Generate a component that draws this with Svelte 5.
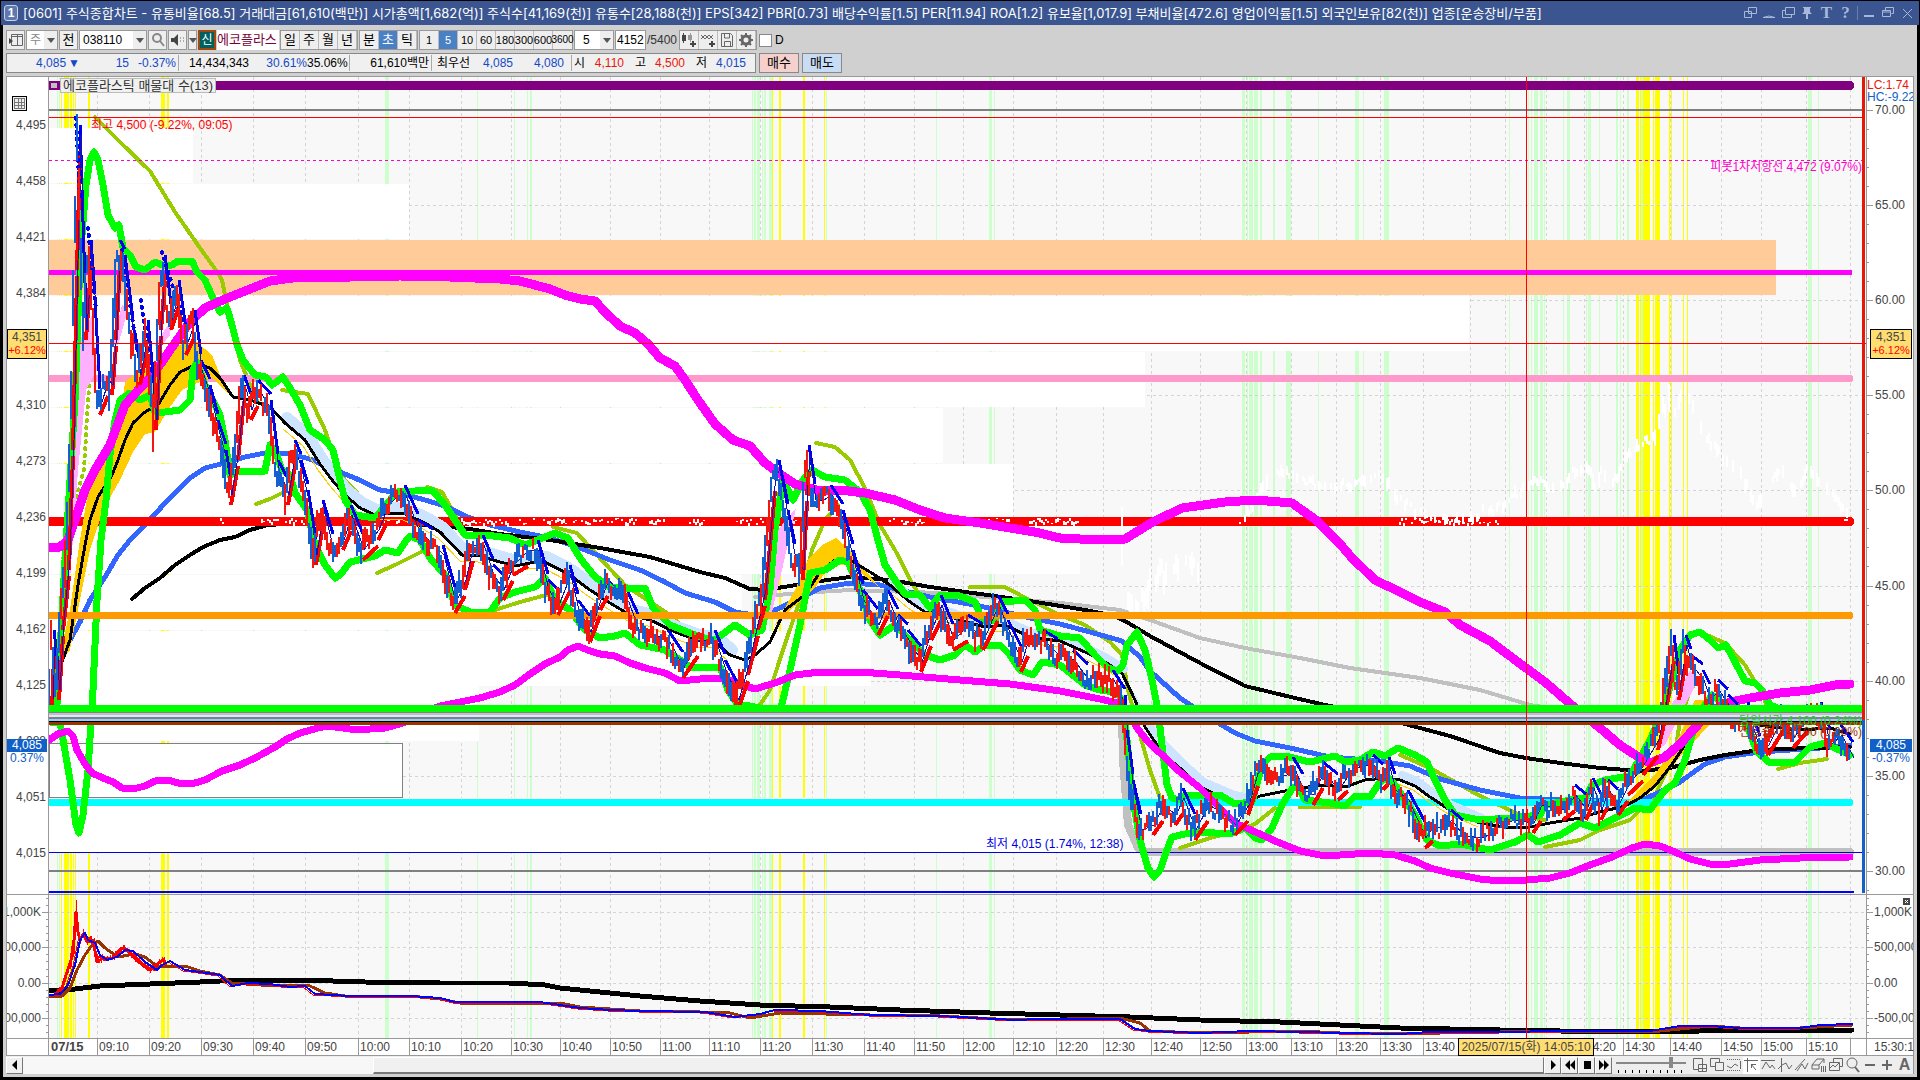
<script>
    let code = '038110'
    let count = '4152'
    let checkedD = false
    let zoomLevel = 80
    let period = '초'
    let unit = '5'

    const facts = '[0601] 주식종합차트 - 유통비율[68.5] 거래대금[61,610(백만)] 시가총액[1,682(억)] 주식수[41,169(천)] 유통수[28,188(천)] EPS[342] PBR[0.73] 배당수익률[1.5] PER[11.94] ROA[1.2] 유보율[1,017.9] 부채비율[472.6] 영업이익률[1.5] 외국인보유[82(천)] 업종[운송장비/부품]'
    const periods = ['일', '주', '월', '년']
    const intraday = ['분', '초', '틱']
    const units = ['1', '5', '10', '60', '180', '300', '600', '3600']

    // the drawing area runs from x 49 to 1866 and from y 77 to 1038
    const left = 49, width = 1817, top = 77
    const pct = (x) => (x - left) / width * 100

    const times = [
        ['09:10', 97], ['09:20', 149], ['09:30', 201], ['09:40', 253], ['09:50', 305], ['10:00', 358],
        ['10:10', 409], ['10:20', 461], ['10:30', 511], ['10:40', 560], ['10:50', 610], ['11:00', 660],
        ['11:10', 709], ['11:20', 760], ['11:30', 812], ['11:40', 864], ['11:50', 914], ['12:00', 963],
        ['12:10', 1013], ['12:20', 1056], ['12:30', 1103], ['12:40', 1151], ['12:50', 1200], ['13:00', 1246],
        ['13:10', 1291], ['13:20', 1336], ['13:30', 1380], ['13:40', 1423], ['', 1470], ['', 1505],
        ['', 1546], ['14:20', 1584], ['14:30', 1623], ['14:40', 1670], ['14:50', 1721], ['15:00', 1761],
        ['15:10', 1806], ['', 1850]
    ]

    const prices = [
        ['4,495', 124], ['4,458', 180], ['4,421', 236], ['4,384', 292], ['4,310', 404], ['4,273', 460], ['4,236', 516],
        ['4,199', 572], ['4,162', 628], ['4,125', 684], ['4,088', 740], ['4,051', 796], ['4,015', 852]
    ]
    const percents = ['70.00', '65.00', '60.00', '55.00', '50.00', '45.00', '40.00', '35.00', '30.00']
        .map((t, i) => [t, 110 + Math.round(i * 95.1)])
    const volumes = [['1,000K', 912], ['500,000', 947], ['0.00', 983], ['-500,000', 1018]]

    // [x, width]
    const green = [
        [57, 1], [59, 1], [385, 4], [477, 1], [514, 1], [527, 1], [530, 2], [752, 1], [754, 2], [757, 3], [762, 1],
        [764, 2], [769, 3], [826, 1], [936, 1], [989, 3], [994, 1], [1242, 3], [1247, 1], [1249, 4], [1254, 4],
        [1260, 2], [1273, 2], [1286, 5], [1318, 1], [1355, 4], [1363, 1], [1384, 5], [1509, 1], [1528, 1], [1531, 1],
        [1534, 4], [1540, 3], [1544, 1], [1563, 1], [1567, 3], [1586, 1], [1588, 3], [1599, 1], [1616, 2],
        [1620, 1], [1627, 2], [1641, 2], [1808, 4], [1818, 1]
    ]
    const yellow = [
        [61, 1], [64, 5], [70, 2], [73, 1], [75, 1], [88, 2], [161, 4], [167, 2], [772, 1], [779, 2], [803, 2],
        [824, 1], [1636, 3], [1640, 1], [1643, 7], [1653, 1], [1655, 5], [1669, 1], [1671, 1], [1683, 1], [1687, 1]
    ]

    // volume by price: top and right end of each bar
    const profile = [
        [128, 193], [184, 409], [296, 1469], [352, 1145], [408, 943], [464, 1013], [519, 1080],
        [575, 742], [631, 871], [686, 479], [798, 1122]
    ]

    const upperBand = '49,547 60,547 68,540 75,520 85,490 95,470 110,445 125,405 140,388 155,372 170,350 190,322 205,308 225,299 245,291 270,281 300,277 350,277 400,276 450,277 500,279 520,281 535,285 550,289 565,295 580,299 595,301 605,312 620,326 635,333 648,344 660,358 675,366 685,380 698,400 715,424 733,440 750,446 765,463 780,474 795,484 820,491 840,490 865,493 895,500 920,510 945,518 980,523 1010,528 1035,532 1060,538 1100,540 1125,539 1151,523 1182,508 1225,502 1255,500 1292,503 1316,520 1341,545 1352,558 1375,580 1400,592 1420,602 1445,612 1460,625 1490,641 1510,656 1526,668 1545,682 1560,695 1575,708 1600,728 1620,745 1640,758 1650,763 1665,757 1680,744 1695,728 1710,711 1730,702 1750,698 1780,693 1810,690 1835,685 1850,684'
    const lowerBand = '49,740 58,734 68,731 73,736 77,750 85,764 92,773 103,778 113,782 122,788 133,789 145,786 155,781 168,780 178,783 195,783 205,780 222,771 240,765 257,757 275,747 287,739 300,733 318,728 328,726 350,729 370,729 385,728 403,723 420,714 440,706 455,703 480,698 500,692 515,685 530,674 545,664 560,657 568,650 578,646 590,651 600,654 615,656 630,663 645,668 665,673 680,681 700,679 725,678 737,683 755,689 775,683 795,675 820,672 860,672 900,675 960,680 1010,684 1060,691 1100,699 1122,704 1130,715 1137,728 1148,742 1160,753 1180,772 1200,788 1220,808 1235,823 1260,834 1275,841 1300,851 1320,855 1340,855 1370,853 1395,855 1415,861 1430,868 1450,873 1480,879 1500,881 1526,880 1550,878 1570,873 1590,865 1612,857 1632,848 1645,844 1660,846 1675,852 1690,859 1710,864 1730,864 1760,860 1800,858 1850,857'
    const slow = '132,599 145,588 160,578 175,565 190,555 203,547 220,540 235,537 250,530 268,525 350,520 440,526 470,529 500,534 550,540 600,548 650,557 700,572 725,578 750,589 765,590 790,586 820,581 850,577 890,580 930,587 980,594 1030,601 1085,610 1115,616 1130,624 1150,636 1200,663 1245,686 1295,698 1325,705 1380,715 1405,724 1450,736 1500,753 1526,758 1560,763 1600,768 1640,771 1670,768 1700,760 1725,755 1760,750 1810,748 1850,747'
    const fast = '54,673 62,662 70,640 78,585 85,545 90,520 98,497 112,475 118,460 125,440 133,423 145,412 158,405 170,385 180,372 197,364 210,368 220,378 233,397 250,400 270,407 285,423 305,440 320,464 332,480 345,495 360,508 375,515 390,513 405,514 425,523 440,532 462,555 480,556 500,562 515,566 530,563 545,562 570,575 590,590 610,603 630,615 650,620 675,632 700,641 715,642 730,655 745,660 755,655 770,642 785,610 805,595 820,572 835,560 850,560 870,572 890,585 910,602 925,612 940,613 960,620 985,627 1005,625 1030,637 1060,641 1085,652 1105,662 1122,673 1135,700 1145,727 1155,742 1170,760 1180,768 1200,787 1230,801 1245,803 1260,796 1290,790 1320,785 1345,787 1365,780 1385,778 1400,780 1415,786 1430,797 1450,810 1480,823 1505,827 1530,827 1550,823 1580,818 1600,812 1625,806 1640,798 1655,786 1670,767 1685,745 1700,722 1720,713 1745,722 1765,726 1800,730 1830,728 1850,734'
    const middle = '60,648 70,640 80,622 90,600 105,577 118,555 130,540 147,523 165,503 180,488 190,478 205,468 225,463 245,457 265,453 290,454 310,459 330,468 357,479 380,490 400,493 425,500 445,506 465,516 490,525 520,532 550,538 580,548 610,560 640,570 665,582 685,593 715,602 735,612 760,616 780,608 800,598 820,588 850,583 880,585 930,597 980,606 1030,618 1060,624 1090,632 1122,641 1140,657 1150,671 1180,698 1210,718 1235,733 1255,741 1290,748 1330,757 1380,761 1410,766 1440,779 1480,790 1520,798 1560,800 1600,801 1640,801 1662,791 1680,782 1705,764 1725,757 1760,752 1820,748 1850,745'
    const longest = '755,597 800,593 850,590 940,593 985,597 1060,603 1120,610 1150,620 1200,638 1245,648 1300,658 1350,668 1420,678 1480,690 1530,705 1600,716'
    const olive = [
        '95,117 120,142 150,171 175,212 200,248 218,273 222,280 228,310 240,360 252,390 258,402',
        '282,390 308,394 325,430 335,460 345,480 375,512', '256,504 270,499 284,492', '377,573 395,565 425,550',
        '427,487 442,492 458,520', '495,610 520,602 550,594', '553,527 577,533 597,555 625,585 650,602 670,615 683,627 700,640',
        '755,712 770,690 783,650 800,600 812,550 825,520 838,505', '816,443 835,447 850,460 865,488 880,525 895,550 913,585 930,610',
        '970,587 1005,587 1020,595 1060,615 1085,625 1110,642 1122,655 1128,690 1140,735 1150,770 1160,798',
        '1180,848 1210,838 1240,830 1255,824 1275,808', '1300,807 1330,807 1360,807', '1400,755 1430,768 1480,796 1520,815 1545,820',
        '1545,847 1580,840 1600,830 1630,820 1655,795 1675,755 1680,720 1690,690 1700,678',
        '1700,632 1725,643 1745,665 1760,690 1770,712', '1778,769 1800,763 1827,759'
    ]
    const greenUpper = '57,704 65,560 70,480 75,400 80,260 86,185 90,160 94,152 98,160 103,185 108,215 115,228 119,225 123,248 130,255 136,267 145,270 155,262 165,266 172,265 178,261 192,261 197,272 205,280 213,298 220,312 227,308 232,325 237,345 243,360 255,375 266,377 272,385 283,377 290,388 300,405 310,430 325,440 333,450 340,480 345,500 355,515 375,518 390,500 397,492 415,491 432,490 445,505 455,520 465,535 485,535 510,538 525,545 540,539 555,533 568,538 580,558 595,577 610,587 620,588 645,588 653,608 670,625 700,637 715,640 735,625 750,635 762,630 770,590 775,530 783,480 793,500 803,480 812,470 825,477 845,480 860,492 870,510 878,540 885,565 895,580 905,594 920,595 930,608 940,595 960,596 975,602 982,620 995,620 1002,602 1025,600 1035,610 1040,630 1060,636 1080,638 1095,655 1108,668 1118,671 1123,665 1127,645 1137,632 1145,650 1152,680 1158,710 1162,745 1167,785 1172,798 1180,800 1185,795 1220,795 1235,804 1252,802 1262,765 1270,757 1285,756 1310,762 1335,756 1345,762 1360,760 1373,752 1385,756 1398,748 1415,755 1427,762 1435,780 1445,800 1455,815 1480,820 1510,818 1540,815 1545,805 1570,800 1585,798 1592,785 1605,780 1630,776 1650,740 1665,705 1680,650 1690,635 1700,632 1710,640 1718,648 1726,645 1735,662 1745,681 1755,683 1762,690 1770,705 1790,713 1845,713'
    const greenLower = '50,722 60,722 70,780 76,825 79,833 83,815 88,770 93,690 97,600 101,540 106,500 110,455 115,420 120,400 130,393 140,400 150,395 155,412 165,412 180,410 190,400 193,370 197,362 205,385 220,415 225,440 230,475 240,471 265,471 270,445 275,450 282,470 290,475 295,493 307,510 315,545 325,565 335,578 340,575 350,562 375,556 385,550 398,553 405,542 410,536 420,540 430,558 445,575 455,605 470,612 490,612 500,598 515,592 535,587 545,578 555,600 570,610 585,630 600,638 615,636 625,633 640,645 665,650 680,660 690,667 720,667 728,690 738,705 745,705 780,712 790,670 800,625 810,573 825,570 840,560 848,562 860,590 870,620 880,635 895,625 910,640 925,655 940,660 955,655 965,645 975,652 985,645 1000,645 1010,655 1020,670 1033,675 1042,662 1060,665 1085,685 1100,690 1115,692 1123,700 1127,740 1133,800 1140,840 1148,868 1154,877 1160,870 1167,850 1172,837 1185,834 1200,832 1230,834 1245,828 1255,838 1262,840 1272,828 1282,805 1293,787 1298,787 1305,800 1330,803 1345,806 1355,796 1370,797 1380,782 1388,777 1395,785 1405,800 1415,815 1427,840 1440,846 1460,844 1490,850 1515,842 1528,835 1538,842 1560,835 1580,823 1595,828 1615,818 1635,808 1650,810 1665,790 1675,783 1685,760 1695,725 1705,705 1712,695 1725,705 1735,710 1748,728 1757,752 1770,763 1795,762 1810,747 1825,743 1835,748 1850,755'
    const price = '49,700 51,640 56,690 60,620 66,560 70,440 74,260 77,135 79,200 83,330 88,250 92,310 97,405 105,380 109,385 113,330 117,250 122,265 130,335 137,375 145,330 153,420 158,320 162,265 168,320 176,290 183,345 192,320 198,370 207,395 215,430 223,460 228,495 235,450 241,385 248,410 255,390 268,410 275,470 285,495 292,450 298,470 305,500 313,555 320,510 330,550 340,540 348,515 360,550 375,530 385,505 395,495 402,495 415,530 430,545 440,555 452,603 462,580 470,545 480,545 490,575 500,590 510,565 525,550 535,550 545,590 555,605 567,575 575,610 587,632 597,600 605,580 615,592 625,602 635,630 650,635 665,640 680,668 695,640 712,640 722,670 735,700 745,665 755,620 762,590 772,475 776,470 785,520 792,560 800,570 804,485 806,455 812,500 820,500 828,495 840,520 850,560 860,600 875,625 885,600 895,625 905,640 918,662 928,630 938,605 950,640 965,625 980,640 995,605 1005,630 1018,662 1025,640 1040,640 1055,655 1070,660 1085,680 1095,675 1110,680 1122,705 1124,740 1130,790 1138,830 1150,825 1160,805 1172,815 1180,798 1192,830 1205,805 1222,815 1232,825 1245,805 1255,770 1262,768 1270,780 1283,775 1290,767 1300,790 1310,795 1320,772 1335,790 1345,775 1358,765 1370,765 1380,780 1386,767 1392,790 1405,800 1422,838 1430,825 1440,830 1448,820 1460,836 1480,838 1490,830 1510,820 1530,823 1538,805 1560,810 1572,795 1583,810 1590,788 1598,810 1605,790 1615,805 1625,785 1640,765 1655,740 1664,695 1671,645 1676,690 1683,645 1688,665 1700,680 1707,700 1715,690 1725,705 1735,720 1745,712 1757,752 1765,745 1780,715 1790,738 1805,715 1818,712 1827,745 1838,735 1850,758'
    const ghost = '1122,545 1125,600 1130,610 1140,605 1150,585 1160,575 1180,570 1200,565'
    const ghostRight = '1245,517 1275,470 1300,478 1330,490 1380,475 1400,500 1425,518 1460,520 1500,507 1535,480 1560,490 1570,475 1587,465 1597,490 1600,470 1612,485 1628,455 1645,442 1655,440 1662,405 1668,425 1670,370 1675,410 1684,385 1690,405 1705,435 1725,460 1740,470 1756,510 1765,490 1782,468 1795,495 1808,470 1830,490 1848,515'

    const netBlack = '49,991 75,989 100,986 150,984 200,982 240,980 300,980 365,982 440,983 510,983 545,985 560,988 610,993 640,996 700,1001 760,1005 830,1007 900,1010 990,1013 1060,1015 1130,1017 1200,1020 1280,1022 1340,1025 1400,1028 1500,1030 1560,1031 1620,1032 1700,1031 1852,1030'
    const netBrown = '49,996 62,996 70,988 77,970 85,955 92,945 98,941 105,948 118,957 135,954 145,957 158,967 185,966 200,971 220,975 232,983 260,985 310,986 325,993 345,996 410,996 440,999 460,1003 560,1003 580,1007 640,1011 700,1012 730,1013 750,1018 780,1013 870,1015 940,1016 1015,1020 1120,1018 1140,1023 1150,1031 1200,1033 1300,1031 1340,1033 1440,1033 1500,1032 1660,1031 1690,1028 1710,1026 1740,1028 1800,1028 1852,1025'
    const netBlue = '49,995 60,994 68,985 75,965 80,940 85,933 88,940 95,943 100,955 107,960 117,957 125,950 133,951 145,962 157,970 162,965 170,961 185,970 200,972 220,975 232,986 248,983 270,984 290,987 305,986 315,994 350,996 410,996 440,998 455,1002 540,1002 580,1008 610,1010 640,1011 705,1012 735,1017 760,1014 775,1010 820,1011 870,1015 940,1016 1015,1020 1040,1019 1120,1019 1135,1029 1150,1031 1200,1033 1250,1031 1300,1032 1340,1033 1400,1034 1430,1032 1500,1032 1560,1031 1650,1031 1680,1026 1710,1026 1740,1028 1800,1028 1820,1025 1852,1024'
    const netRed = '55,994 62,988 67,972 71,960 74,940 76,912 78,932 80,940 83,934 87,942 90,938 94,945 97,962 103,958 113,958 118,952 122,948 128,951 139,962 150,970 160,962 163,960 166,964'

    const parse = (s) => s.split(' ').map((p) => p.split(',').map(Number))

    function rand(n) {
        const v = Math.sin(n * 12.9898) * 43758.5453
        return v - Math.floor(v)
    }

    function yAt(pts, x) {
        for (let i = 1; i < pts.length; i++) {
            const [x0, y0] = pts[i - 1]
            const [x1, y1] = pts[i]
            if (x <= x1) return y0 + (y1 - y0) * (x - x0) / (x1 - x0 || 1)
        }
        return pts[pts.length - 1][1]
    }

    // one short vertical bar per tick, split in up and down
    function bars(line, step, size, keep) {
        const pts = parse(line)
        let up = '', down = ''
        for (let x = pts[0][0]; x < pts[pts.length - 1][0]; x += step) {
            if (rand(x + 3) > keep) continue
            const move = Math.min(Math.abs(yAt(pts, x + 2) - yAt(pts, x)), 40)
            const y = Math.round(yAt(pts, x) + (rand(x) - 0.5) * size)
            const h = Math.round(size * 0.4 + rand(x + 7) * size + move)
            const d = `M${x} ${y - Math.round(h / 2)}v${h}`
            if (rand(x + 1) > 0.5) up += d
            else down += d
        }
        return { up, down }
    }

    // trailing stops: over the price while it falls, under it while it rises
    function stops(line) {
        const pts = parse(line)
        let over = '', under = ''
        for (let i = 1; i < pts.length; i++) {
            const [x0, y0] = pts[i - 1]
            const [x1, y1] = pts[i]
            if (y1 - y0 > 12) over += `M${x0 + 3} ${y0 - 10}L${x1 + 3} ${y1 - 16}`
            if (y0 - y1 > 12) under += `M${x0 + 3} ${y0 + 10}L${x1 + 3} ${y1 + 16}`
        }
        return { over, under }
    }

    const candles = bars(price, 2, 14, 1)
    const trail = stops(price)
    const faint = bars(ghostRight, 2, 8, 0.6)
    const faintLow = bars(ghost, 2, 18, 0.7)
    const shift = (line, dx, dy) => parse(line).map(([x, y]) => `${x + dx},${y + dy}`).join(' ')
    const net = bars(netRed, 1, 3, 1)

    let specks = ''
    for (const [a, b] of [[215, 225], [262, 310], [375, 400], [458, 510], [520, 640], [650, 665], [690, 705], [735, 770], [790, 800], [890, 925], [975, 1010], [1030, 1080], [1240, 1250], [1400, 1500], [1845, 1850]]) {
        for (let x = a; x < b; x += 2) {
            if (rand(x) > 0.4) specks += `M${x} ${518 + Math.round(rand(x + 5) * 5)}v${1 + Math.round(rand(x + 2) * 3)}`
        }
    }

    const along = (from, to, dy) => parse(fast).filter((p) => p[0] > from && p[0] < to).map(([x, y]) => `${x + 2},${y + dy}`).join(' ')
    const cloud = along(275, 745, -5)
    const cloudMid = along(870, 1125, -4)
    const cloudRight = along(1395, 1490, -5)
</script>

<div class="screen">
    <header class="title">
        <span class="badge">1</span>
        <h1>{facts}</h1>
        <div class="win">
            <button aria-label="분리"><svg viewBox="0 0 14 14"><path d="M5.5 1.5h8v6h-8zM1.5 5.5h7v6h-7z" /></svg></button>
            <button aria-label="내리기"><svg viewBox="0 0 14 14"><path d="M1 11.5q6-3 12 0z" /></svg></button>
            <button aria-label="복사"><svg viewBox="0 0 14 14"><path d="M4.5 1.5h9v7h-9zM4 4.5H1.5v7h9V9" /></svg></button>
            <button aria-label="고정"><svg viewBox="0 0 14 14"><path class="solid" d="M3 1h8v1h-1v4l2 2H8v5H6V8H2l2-2V2H3z" /></svg></button>
            <button class="glyph" aria-label="글꼴">T</button>
            <button class="glyph" aria-label="도움말">?</button>
            <i></i>
            <button aria-label="최소화"><svg viewBox="0 0 14 14"><path class="solid" d="M2 9h10v2H2z" /></svg></button>
            <button aria-label="이전 크기"><svg viewBox="0 0 14 14"><path d="M4.5 4V1.5h8v6h-2M1.5 4.5h8v6h-8zM2 6h8" /></svg></button>
            <button aria-label="닫기"><svg viewBox="0 0 14 14"><path d="M3 3l9 9M12 3l-9 9" /></svg></button>
        </div>
    </header>

    <main>
        <div class="tools">
            <button class="tool" aria-label="목록"><svg viewBox="0 0 16 16"><path class="ink" d="M3.5 2.5h11v11h-11zM9.5 3v10M3 4.5h11" /><path class="dark" d="M1 6l4 3-4 3z" /></svg></button>
            <span class="pick w32 grey"><select aria-label="구분"><option>주</option></select></span>
            <button class="tool">전</button>
            <span class="pick w68"><input aria-label="종목코드" bind:value={code}></span>
            <button class="tool" aria-label="종목 찾기"><svg viewBox="0 0 16 16"><circle class="ink thick" cx="7" cy="6" r="4" /><path class="ink thick" d="M10 9l4 5" /></svg></button>
            <button class="tool" aria-label="소리"><svg viewBox="0 0 16 16"><path class="dark" d="M1 6h3l4-4v12l-4-4H1z" /><path class="ink" d="M10 6h1M10 9h1M13 6h1M13 9h1" /></svg></button>
            <button class="tool arrow" aria-label="소리 메뉴"></button>
            <span class="new">신</span><span class="name">에코플라스</span>
            <div class="group">
                {#each periods as p}
                    <button class:on={period == p} on:click={() => period = p}>{p}</button>
                {/each}
            </div>
            <div class="group">
                {#each intraday as p}
                    <button class:on={period == p} on:click={() => period = p}>{p}</button>
                {/each}
            </div>
            <div class="group units">
                {#each units as u}
                    <button class:on={unit == u} on:click={() => unit = u}>{u}</button>
                {/each}
            </div>
            <span class="pick w40"><select aria-label="주기"><option>5</option></select></span>
            <input class="count" aria-label="개수" bind:value={count}>
            <span class="total">/5400</span>
            <div class="group icons">
                <button aria-label="차트 추가"><svg viewBox="0 0 16 16"><path class="dark" d="M1 3h4v6H1zM2 1h1v10H2z" /><path class="mute" d="M7 3h4v5H7zM9 1h1v9H9z" /><path class="dark" d="M9 11h2V9h2v2h2v2h-2v2h-2v-2H9z" /></svg></button>
                <button aria-label="지표 추가"><svg viewBox="0 0 16 16"><path class="ink" d="M1 7l4-4 4 4 4-4M1 3l4 4 4-4 4 4" /><path class="dark" d="M9 11h2V9h2v2h2v2h-2v2h-2v-2H9z" /></svg></button>
                <button aria-label="저장"><svg viewBox="0 0 16 16"><path class="ink" d="M2.5 1.5h9l2 2v11h-11zM5.5 2v4h5V2M5.5 14V9.500h6v5" /></svg></button>
                <button aria-label="설정"><svg viewBox="0 0 16 16"><circle class="gear" cx="8" cy="8" r="4" /><path class="teeth" d="M8 1v3M8 12v3M1 8h3M12 8h3M3 3l2 2M11 11l2 2M13 3l-2 2M3 13l2-2" /></svg></button>
            </div>
            <label class="tick"><input type="checkbox" bind:checked={checkedD}>D</label>
        </div>

        <div class="quote">
            <div class="box">
                <span class="down c1">4,085<b>▼</b></span>
                <span class="down c2">15</span>
                <span class="down c3">-0.37%</span>
                <span class="c4">14,434,343</span>
                <span class="down c5">30.61%</span>
                <span class="c6">35.06%</span>
                <span class="c7">61,610백만</span>
                <span class="c8">최우선</span>
                <span class="down c9">4,085</span>
                <span class="down c10">4,080</span>
                <span class="c11">시</span>
                <span class="up c12">4,110</span>
                <span class="c11">고</span>
                <span class="up c12">4,500</span>
                <span class="c11">저</span>
                <span class="down c12">4,015</span>
            </div>
            <button class="order buy">매수</button>
            <button class="order sell">매도</button>
        </div>

        <section class="panel">
            <div class="chart">
                <div class="axis leftaxis">
                    <svg class="scale" viewBox="7 77 41 961">
                        <g class="gridicon"><path d="M12.5 96.5h14v14h-14z" /><path class="cells" d="M14.5 98.5h10v10h-10zM18 98v11M21 98v11M14 102h11M14 105h11" /></g>
                        {#each prices as [t, y]}
                            <text x="46" y={y + 5} text-anchor="end">{t}</text>
                        {/each}
                        {#each volumes as [t, y]}
                            <text x="41" y={y + 4} text-anchor="end">{t}</text>
                            <path class="mark" d="M42 {y}.5h6M46 {y + 7}.5h2M46 {y + 14}.5h2M46 {y - 7}.5h2M46 {y - 14}.5h2" />
                        {/each}
                        <path class="rule" d="M7 894.5h41" />
                    </svg>
                    <div class="tag cursor"><span>4,351</span><em>+6.12%</em></div>
                    <div class="tag last"><span>4,085</span><em>0.37%</em></div>
                </div>

                <div class="plot">
                    <svg viewBox="49 77 1817 961" preserveAspectRatio="none">
                        <path class="base" d="M49 77h1817v961H49z" />
                        {#each green as [x, w]}<rect class="calm" {x} y="77" width={w} height="961" />{/each}
                        {#each yellow as [x, w]}<rect class="hot" {x} y="77" width={w} height="961" />{/each}
                        {#each times as [, x]}<path class="grid" d="M{x}.5 77V1038" />{/each}
                        {#each percents as [, y]}<path class="grid" d="M49 {y}.5H1862" />{/each}
                        {#each volumes as [, y]}<path class="grid" d="M49 {y}.5H1866" />{/each}
                        {#each profile as [y, x]}<rect class="white" x="49" {y} width={x - 49} height="55" />{/each}
                        <rect class="framed" x="49.5" y="743.5" width="353" height="54" />
                        <rect class="peach" x="49" y="240" width="1727" height="55" />

                        <g class="line">
                            <polyline class="silver wide" points="1122,715 1123,760 1128,825 1138,848 1145,852 1850,852" />
                            <polyline class="silver" points={longest} />
                            {#each olive as points}<polyline class="olive" {points} />{/each}
                            <polyline class="olive dots" points="54,705 58,650 62,600 64,540 84,470 88,400 93,340" />
                            <polyline class="middle" points={middle} />
                            <polyline class="slow" points={slow} />
                        </g>

                        <path class="lv purple" d="M49 85.5H1850" />
                        <path class="lv grey" d="M49 110H1862M49 871H1862" />
                        <path class="lv thin" d="M49 117.5H1862" />
                        <path class="lv pivot" d="M49 160.5H1862" />
                        <path class="lv pink" d="M49 378.5H1850" />
                        <path class="lv mag" d="M49 272.5H1850" />
                        <path class="lv red" d="M49 521.5H1850" />
                        <path class="lv cyan" d="M49 802.5H1850" />
                        <path class="lv low" d="M49 852.5H1862" />
                        <path class="lv bottom" d="M49 892H1853" />
                        <path class="speck" d={specks + faint.up + faint.down + faintLow.up + faintLow.down} />

                        <path class="gold" d="M57 668L70 610 80 540 90 480 105 448 120 425 125 382 140 370 160 367 178 345 197 342 212 355 222 380 228 393 212 378 197 383 182 390 168 410 155 432 145 434 133 452 120 480 103 510 90 550 80 600 70 650Z" />
                        <path class="gold" d="M775 625L795 590 808 560 822 545 836 538 850 550 878 586 850 565 830 565 815 588 795 606Z" />
                        <path class="gold" d="M1625 804L1655 775 1680 735 1695 700 1712 700 1718 715 1700 735 1684 752 1660 782 1640 798Z" />
                        <path class="rose" d="M64 620L72 430 80 340 92 315 97 370 86 390 78 470 70 580Z" />
                        <path class="rose" d="M155 345L168 325 174 305 170 335 158 350ZM112 345L122 305 128 310 118 345ZM764 610L778 530 796 508 782 570 770 620ZM1655 750L1668 712 1690 670 1698 680 1680 715 1665 745Z" />
                        <path class="sky" d="M1126 680L1142 706 1160 735 1180 755 1205 778 1235 791 1262 796 1245 805 1225 801 1200 789 1175 766 1150 738 1136 705Z" />
                        <g class="line">
                            <polyline class="haze" points={cloud} />
                            <polyline class="haze small" points={cloudMid} />
                            <polyline class="haze small" points={cloudRight} />
                            <polyline class="signal" points={shift(cloud, -4, 11)} />
                            <polyline class="signal" points={shift(cloudMid, -4, 10)} />
                            <polyline class="signal" points={shift(cloudRight, -4, 9)} />
                            <polyline class="fast" points={fast} />
                            <polyline class="band" points={greenLower} />
                            <polyline class="band" points={greenUpper} />
                            <polyline class="outer" points={upperBand} />
                            <polyline class="outer thinner" points={lowerBand} />
                        </g>
                        <path class="lv orange" d="M49 615.5H1850" />

                        <path class="over" d={trail.over} />
                        <path class="under" d={trail.under} />
                        <path class="over beads" d="M76 118L80 200M88 228L96 310M122 250L137 350M162 252L183 320M141 300L151 370" />
                        <polyline class="average" points={shift(price, 4, 0)} />
                        <path class="tickdown" d={candles.down} />
                        <path class="tickup" d={candles.up} />

                        <g class="stack">
                            <path stroke="#00ff00" stroke-width="7" d="M49 708.5H1862" />
                            <path stroke="#808080" d="M49 712.5H1862" />
                            <path stroke="#c0c0c0" stroke-width="2" d="M49 714H1862" />
                            <path stroke="#d8e8ff" stroke-width="2" d="M49 716H1862" />
                            <path stroke="#808080" stroke-width="2" d="M49 718H1862" />
                            <path stroke="#99ccff" stroke-width="2" d="M49 720H1862" />
                            <path stroke="#000000" d="M49 721.5H1862" />
                            <path stroke="#993300" stroke-width="3" d="M49 723.5H1862" />
                        </g>

                        <g class="line net">
                            <polyline class="netblack" points={netBlack} />
                            <polyline class="netbrown" points={netBrown} />
                            <polyline class="netred" points={netRed} />
                            <path class="netred slim" d={net.up + net.down} />
                            <polyline class="netred slim" points={shift(netBlue, -2, 1)} />
                            <polyline class="netblue" points={netBlue} />
                        </g>
                        <path class="rule" d="M49 894.5H1866" />
                        <path class="cross" d="M1526.5 77V1038M49 343.5H1866" />
                        <rect class="rise" x="1862" y="77" width="3" height="643" />
                        <rect class="fall" x="1862" y="720" width="3" height="173" />
                    </svg>
                    <button class="legend" aria-label="매물대 선택"></button>
                    <button class="legend caption">에코플라스틱 매물대 수(13)</button>
                    <span class="note high" style="left: {pct(91)}%; top: {116 - top}px">최고 4,500 (-9.22%, 09:05)</span>
                    <span class="note lowest" style="left: {pct(986)}%; top: {835 - top}px">최저 4,015 (1.74%, 12:38)</span>
                    <span class="note pivotnote" style="top: {158 - top}px">피봇1차저항선 4,472 (9.07%)</span>
                    <span class="note open" style="top: {712 - top}px">당일시가 4,100 (0.24%)</span>
                    <span class="note close" style="top: {723 - top}px">전일종가 4,100 (0.00%)</span>
                </div>

                <div class="axis rightaxis">
                    <svg class="scale" viewBox="1867 77 46 961">
                        <text class="lc" x="1867" y="89">LC:1.74</text>
                        <text class="hc" x="1867" y="101">HC:-9.22</text>
                        {#each percents as [t, y]}
                            <path class="mark" d="M1867 {y}.5h6M1867 {y + 19}.5h2M1867 {y + 38}.5h2M1867 {y + 57}.5h2M1867 {y + 76}.5h2" />
                            <text x="1875" y={y + 4}>{t}</text>
                        {/each}
                        <path class="rule" d="M1867 894.5h46" />
                        {#each volumes as [t, y]}
                            <path class="mark" d="M1867 {y}.5h6M1867 {y + 7}.5h2M1867 {y + 14}.5h2M1867 {y - 7}.5h2M1867 {y - 14}.5h2" />
                            <text x="1874" y={y + 4}>{t}</text>
                        {/each}
                        <path class="shut" d="M1903 898h7v7h-7z" /><path class="x" d="M1905 900l3 3M1908 900l-3 3" />
                    </svg>
                    <div class="tag cursor"><span>4,351</span><em>+6.12%</em></div>
                    <div class="tag last"><span>4,085</span><em>-0.37%</em></div>
                </div>
            </div>

            <div class="timeline">
                <div class="corner"></div>
                <div class="times">
                    <b>07/15</b>
                    {#each times as [t, x]}
                        <span style="left: {pct(x)}%">{t}</span>
                    {/each}
                    <div class="now" style="left: {pct(1458)}%">2025/07/15(화) 14:05:10</div>
                </div>
                <div class="end">15:30:1</div>
            </div>
        </section>

        <footer>
            <button class="key" aria-label="왼쪽으로"><svg viewBox="0 0 12 12"><path d="M8 1v10L3 6z" /></svg></button>
            <div class="track"><div class="thumb"></div></div>
            <button class="key" aria-label="재생"><svg viewBox="0 0 12 12"><path d="M4 1v10l5-5z" /></svg></button>
            <button class="key" aria-label="뒤로"><svg viewBox="0 0 12 12"><path d="M6 1v10L1 6zM11 1v10L6 6z" /></svg></button>
            <button class="key" aria-label="정지"><svg viewBox="0 0 12 12"><path d="M3 2h7v8H3z" /></svg></button>
            <button class="key" aria-label="앞으로"><svg viewBox="0 0 12 12"><path d="M1 1v10l5-5zM6 1v10l5-5z" /></svg></button>
            <div class="slide"><input type="range" aria-label="확대 비율" bind:value={zoomLevel}></div>
            <div class="draw">
                <button aria-label="창 추가"><svg viewBox="0 0 16 16"><path d="M1.500 1.500h9v11h-9z" /><path class="paper" d="M6.500 7.500h8v7h-8zM10.500 7v8M6 11.500h9" /></svg></button>
                <button aria-label="창 복사"><svg viewBox="0 0 16 16"><path d="M1.500 1.500h9v8h-9z" /><path class="paper" d="M6.500 5.500h8v8h-8z" /></svg></button>
                <button aria-label="영역"><svg viewBox="0 0 16 16"><path stroke-dasharray="1 1" d="M1 2.500h14M1 13.500h14" /><path d="M1 9l4 2 4-4 3 2M14.500 4v8" /></svg></button>
                <button class="on" aria-label="십자선"><svg viewBox="0 0 16 16"><path d="M1 3.500h14M4.500 1v14M8 7.500h5M8 7l5 6M8.500 7v4" /></svg></button>
                <button aria-label="추세선"><svg viewBox="0 0 16 16"><path d="M1 3.500h14M2 12l4-7 4 6 2-3 3 4" /></svg></button>
                <button aria-label="수직선"><svg viewBox="0 0 16 16"><path d="M4.500 1v14M1 12l4-4 4-2 3 6 3-4" /></svg></button>
                <button aria-label="각도선"><svg viewBox="0 0 16 16"><path d="M1 13L11 2M3 14l5-7 3 5 3-6" /></svg></button>
                <button aria-label="모두 지우기"><svg viewBox="0 0 16 16"><path d="M1 8l5-6h7l-5 6zM1 8v4h7V8M13 2v4M10.500 9v6M12.500 9v6M14.500 9v6" /></svg></button>
                <button aria-label="차트 겹치기"><svg viewBox="0 0 16 16"><path d="M5.500 1.500h9v8h-9z" /><path class="paper" d="M1.500 5.500h10v8h-10z" /><path d="M2 11l3-3 2 2 4-4" /></svg></button>
                <button aria-label="돋보기"><svg viewBox="0 0 16 16"><circle cx="7" cy="6" r="5" /><path stroke-width="2" d="M10 10l4 5" /></svg></button>
                <button aria-label="축소"><svg viewBox="0 0 16 16"><path stroke-width="2" d="M3 8h10" /></svg></button>
                <button aria-label="확대"><svg viewBox="0 0 16 16"><path stroke-width="2" d="M3 8h10M8 3v10" /></svg></button>
                <button class="letter" aria-label="자동">A</button>
            </div>
        </footer>
    </main>
</div>

<style>
    :global(body) {
        background: black;
    }
    .screen {
        font: 12px/16px 'Liberation Sans', 'Noto Sans CJK KR', sans-serif;
        color: black;
        padding: 1px 0 3px;
    }
    button, input, select {
        font: inherit;
        color: inherit;
        padding: 0;
        border: 0;
        border-radius: 0;
        box-sizing: border-box;
        background: none;
    }
    select {
        appearance: none;
        outline: none;
    }
    .title {
        margin: 0 1px;
        height: 24px;
        background: #3a5590;
        color: white;
        display: flex;
        align-items: center;
        padding: 0 4px 0 3px;
        gap: 5px;
    }
    .badge {
        width: 12px;
        line-height: 14px;
        text-align: center;
        border: 1px solid #c8d2e8;
        border-radius: 3px;
        font-weight: bold;
        background: #6078ac;
    }
    h1 {
        margin: 0;
        font-family: Inter, 'Noto Sans CJK KR', sans-serif;
        font-size: 13px;
        line-height: 20px;
        font-weight: normal;
        white-space: pre;
        flex: 1;
        min-width: 0;
    }
    .win {
        display: flex;
        align-items: center;
        gap: 4px;
        color: #a9b8d8;
    }
    .win button {
        width: 15px;
        height: 18px;
    }
    .win svg {
        width: 14px;
        height: 14px;
        display: block;
    }
    .win path {
        fill: none;
        stroke: #a9b8d8;
    }
    .win .solid {
        fill: #a9b8d8;
        stroke: none;
    }
    .win .glyph {
        font: bold 17px/18px 'Liberation Serif', serif;
    }
    .win i {
        width: 1px;
        height: 14px;
        background: #6a7fae;
    }
    main {
        margin: 0 3px;
        background: #d0d0d0;
        padding: 5px 3px 3px;
    }
    .tools {
        display: flex;
        align-items: center;
        height: 20px;
        gap: 1px;
    }
    .tool, .group {
        height: 20px;
        border: 1px solid #999;
        box-sizing: border-box;
        background: #eee;
        font-size: 13px;
    }
    .tool {
        width: 19px;
        display: flex;
        align-items: center;
        justify-content: center;
    }
    .tool svg, .icons svg {
        width: 16px;
        height: 16px;
        display: block;
        flex: none;
    }
    .group.units {
        font-size: 12px;
    }
    .ink {
        fill: none;
        stroke: #666;
    }
    .thick {
        stroke-width: 2;
        stroke: #888;
    }
    .dark {
        fill: #444;
    }
    .mute {
        fill: #999;
    }
    .gear {
        fill: none;
        stroke: #666;
        stroke-width: 3;
    }
    .teeth {
        stroke: #666;
        stroke-width: 2;
    }
    .tool.arrow {
        width: 9px;
    }
    .arrow::after, .pick::after {
        content: '';
        border: 4px solid transparent;
        border-top: 5px solid #555;
        border-bottom: 0;
    }
    .pick {
        display: flex;
        align-items: center;
        height: 20px;
        box-sizing: border-box;
        border: 1px solid #999;
        background: linear-gradient(to left, #eee 13px, white 13px);
        padding-right: 2px;
    }
    .pick input, .pick select {
        flex: 1;
        min-width: 0;
        padding-left: 3px;
    }
    .w32 {
        width: 32px;
    }
    .w68 {
        width: 68px;
    }
    .w40 {
        width: 40px;
    }
    .w40 select {
        padding-left: 8px;
    }
    .grey {
        color: #888;
    }
    .new {
        height: 20px;
        width: 18px;
        box-sizing: border-box;
        border: 2px solid #a04a10;
        background: #006060;
        color: white;
        line-height: 16px;
        text-align: center;
    }
    .name {
        width: 62px;
        height: 20px;
        font-size: 13px;
        line-height: 20px;
        background: white;
        color: #7a0038;
        white-space: nowrap;
    }
    .group {
        display: flex;
    }
    .group button {
        width: 19px;
        border-right: 1px solid #bbb;
        display: flex;
        align-items: center;
        justify-content: center;
    }
    .units button:last-child {
        font-size: 10px;
        border-right: 0;
    }
    .units button {
        font-size: 11px;
    }
    .group .on {
        background: #4a80c4;
        color: white;
    }
    .count {
        width: 31px;
        height: 20px;
        border: 1px solid #999;
        background: white;
        padding-left: 1px;
    }
    .total {
        color: #333;
        width: 31px;
    }
    .tick {
        display: flex;
        align-items: center;
        gap: 3px;
    }
    .tick input {
        appearance: none;
        width: 13px;
        height: 13px;
        margin: 0 0 0 1px;
        border: 1px solid #888;
        background: white;
    }
    .quote {
        display: flex;
        gap: 3px;
        margin-top: 3px;
    }
    .box {
        width: 750px;
        height: 20px;
        box-sizing: border-box;
        border: 1px solid #888;
        background: #f0f0f0;
        display: flex;
        align-items: center;
        white-space: nowrap;
    }
    .box span {
        box-sizing: border-box;
        text-align: right;
        flex: none;
    }
    .box b {
        margin-left: 2px;
    }
    .box .c1 { width: 73px; }
    .box .c2 { width: 49px; }
    .box .c3 { width: 50px; padding-right: 2px; border-right: 1px solid #aaa; }
    .box .c4 { width: 70px; }
    .box .c5 { width: 58px; }
    .box .c6 { width: 43px; padding-right: 2px; border-right: 1px solid #aaa; }
    .box .c7 { width: 82px; padding-right: 2px; border-right: 1px solid #aaa; }
    .box .c8 { width: 38px; }
    .box .c9 { width: 43px; }
    .box .c10 { width: 59px; padding-right: 7px; border-right: 1px solid #aaa; }
    .box .c11 { width: 13px; }
    .box .c12 { width: 48px; padding-right: 9px; }
    .down {
        color: #1448c8;
    }
    .up {
        color: #e81808;
    }
    .order {
        width: 40px;
        height: 20px;
        border: 1px solid #888;
        font-size: 13px;
    }
    .buy {
        background: #f6d0cc;
    }
    .sell {
        background: #c8dcf4;
    }
    .panel {
        border: 1px solid #999;
        border-bottom: 0;
        margin-top: 3px;
        background: white;
    }
    .chart {
        display: flex;
    }
    .axis {
        position: relative;
        flex: none;
        background: white;
        overflow: hidden;
    }
    .leftaxis {
        width: 41px;
        border-right: 1px solid #999;
    }
    .rightaxis {
        width: 46px;
        border-left: 1px solid #999;
    }
    .scale {
        display: block;
        width: 100%;
        height: 961px;
        shape-rendering: crispEdges;
    }
    .scale text {
        fill: #444;
    }
    .scale .lc {
        fill: #e81808;
    }
    .scale .hc {
        fill: #1060c8;
    }
    .mark, .rule {
        stroke: #999;
        fill: none;
    }
    .gridicon path {
        fill: #eee;
        stroke: black;
    }
    .gridicon .cells {
        stroke: #777;
    }
    .shut {
        fill: #444;
    }
    .x {
        stroke: white;
    }
    .tag {
        position: absolute;
        left: 0;
        right: 1px;
        line-height: 13px;
        text-align: center;
    }
    .rightaxis .tag {
        left: 3px;
        right: 1px;
    }
    .tag span, .tag em {
        display: block;
        font-style: normal;
    }
    .cursor {
        top: 252px;
        border: 1px solid black;
        background: #ffdd70;
        color: #444;
        padding: 1px 0;
    }
    .cursor em {
        color: red;
        font-size: 11px;
    }
    .last {
        top: 662px;
        color: #1060c8;
    }
    .last span {
        background: #1060c8;
        color: white;
    }
    .plot {
        position: relative;
        flex: 1;
        min-width: 0;
        overflow: hidden;
    }
    .plot svg {
        display: block;
        width: 100%;
        height: 961px;
        shape-rendering: crispEdges;
    }
    .base { fill: #f8f8f8; }
    .calm { fill: #ccffcc; }
    .hot { fill: #ffff00; }
    .grid { stroke: #d4d4d4; stroke-dasharray: 3 3; }
    .white { fill: white; }
    .framed { fill: white; stroke: #808080; }
    .peach { fill: #ffcc99; }
    .line polyline { fill: none; stroke-linejoin: round; stroke-linecap: round; }
    .silver { stroke: #c0c0c0; stroke-width: 4; }
    .silver.wide { stroke-width: 8; }
    .olive { stroke: #99cc00; stroke-width: 4; }
    .line .olive.dots { stroke-dasharray: 1 6; }
    .middle { stroke: #3366ff; stroke-width: 5; }
    .slow { stroke: black; stroke-width: 4; }
    .fast { stroke: black; stroke-width: 3; }
    .band { stroke: #00ff00; stroke-width: 7; }
    .outer { stroke: #ff00ff; stroke-width: 9; }
    .outer.thinner { stroke-width: 7; }
    .haze { stroke: #cce4ff; stroke-width: 12; }
    .haze.small { stroke-width: 8; }
    .signal { stroke: #ffcc00; stroke-width: 1; }
    .lv { fill: none; stroke-linecap: round; }
    .purple { stroke: #800080; stroke-width: 9; }
    .lv.grey { stroke: #808080; stroke-width: 2; }
    .thin { stroke: red; }
    .pivot { stroke: #ff00cc; stroke-dasharray: 3 3; stroke-linecap: butt; }
    .mag { stroke: #ff00ff; stroke-width: 5; }
    .pink { stroke: #ff99cc; stroke-width: 7; }
    .red { stroke: red; stroke-width: 9; }
    .orange { stroke: #ff9900; stroke-width: 7; }
    .cyan { stroke: #00ffff; stroke-width: 7; }
    .low { stroke: #0000e0; }
    .bottom { stroke: #0000ff; stroke-width: 2; }
    .speck { stroke: white; stroke-width: 2; }
    .gold { fill: #ffcc00; }
    .rose { fill: #ffb0ff; }
    .sky { fill: #cce4ff; }
    .over { stroke: #0000f0; stroke-width: 3; fill: none; }
    .beads { stroke-linecap: round; stroke-dasharray: 1 6; stroke-width: 4; }
    .under { stroke: red; stroke-width: 4; fill: none; }
    .average { stroke: #1010c0; fill: none; }
    .tickdown { stroke: #1460d0; stroke-width: 2; }
    .tickup { stroke: #f01810; stroke-width: 2; }
    .stack path { fill: none; }
    .netblack { stroke: black; stroke-width: 5; }
    .netbrown { stroke: #993300; stroke-width: 3; }
    .netred { stroke: red; stroke-width: 3; }
    .netred.slim { stroke-width: 1; }
    .netblue { stroke: #0000ff; stroke-width: 2; }
    .cross { stroke: red; fill: none; }
    .rise { fill: #e81808; }
    .fall { fill: #1460c8; }
    .legend {
        position: absolute;
        top: 4px;
        left: 0;
        width: 10px;
        height: 9px;
        background: #c0c0c0;
        border: 2px solid #800080;
    }
    .caption {
        top: 1px;
        left: 11px;
        width: 156px;
        height: 15px;
        background: #f0f0f0;
        border: 1px solid #bbb;
        color: #333;
        font-size: 13px;
        line-height: 13px;
        white-space: nowrap;
    }
    .note {
        position: absolute;
        white-space: nowrap;
        line-height: 18px;
    }
    .high {
        color: red;
    }
    .lowest {
        color: #0000e0;
    }
    .pivotnote, .open, .close {
        right: 4px;
        color: #ff00cc;
    }
    .open {
        color: #20d020;
    }
    .close {
        color: #993300;
    }
    .timeline {
        display: flex;
        height: 18px;
        border-top: 1px solid #999;
        border-bottom: 1px solid #999;
        box-sizing: border-box;
        line-height: 16px;
        color: #444;
    }
    .corner {
        width: 41px;
        border-right: 1px solid #999;
        flex: none;
    }
    .times {
        position: relative;
        flex: 1;
    }
    .times b {
        margin-left: 2px;
        font-size: 13px;
    }
    .times span {
        position: absolute;
        top: 0;
        height: 16px;
        padding-left: 1px;
        border-left: 1px solid #999;
    }
    .now {
        position: absolute;
        top: -1px;
        border: 1px solid black;
        background: #ffdd70;
        width: 134px;
        height: 16px;
        text-align: center;
        white-space: nowrap;
    }
    .end {
        width: 39px;
        padding-left: 7px;
        border-left: 1px solid #999;
        flex: none;
    }
    footer {
        display: flex;
        align-items: center;
        height: 18px;
        background: #eee;
        border-right: 1px solid #999;
    }
    .key {
        width: 17px;
        height: 17px;
        background: #f0f0f0;
        border: 1px solid white;
        border-right-color: #777;
        border-bottom-color: #777;
        display: flex;
        align-items: center;
        justify-content: center;
    }
    .key svg {
        width: 12px;
        height: 12px;
        flex: none;
    }
    .track {
        flex: 1;
        height: 17px;
        background: #f7f7f7;
        display: flex;
        justify-content: flex-end;
    }
    .thumb {
        width: 77%;
        box-sizing: border-box;
        background: #f0f0f0;
        border: 1px solid white;
        border-right-color: #777;
        border-bottom: 2px solid #777;
    }
    .slide {
        width: 78px;
        height: 17px;
        box-sizing: border-box;
        padding: 0 4px;
    }
    .slide input {
        appearance: none;
        display: block;
        width: 70px;
        height: 12px;
        margin: 0;
        background: linear-gradient(#888, #888) 0 5px / 100% 2px no-repeat;
    }
    .slide input::-webkit-slider-thumb {
        appearance: none;
        width: 4px;
        height: 11px;
        background: #888;
    }
    .slide::after {
        content: '';
        display: block;
        height: 3px;
        width: 68px;
        margin: 1px 0 0 2px;
        background: repeating-linear-gradient(to right, black 0 1px, transparent 1px 7px);
    }
    .draw {
        display: flex;
        padding-left: 2px;
    }
    .draw button {
        width: 17px;
        height: 17px;
        color: #666;
    }
    .draw .on {
        background: white;
    }
    .draw .letter {
        font: bold 16px/16px 'Liberation Sans', sans-serif;
    }
    .draw svg {
        width: 16px;
        height: 16px;
        display: block;
        fill: none;
        stroke: #666;
    }
    .draw .paper {
        fill: #eee;
    }
</style>
